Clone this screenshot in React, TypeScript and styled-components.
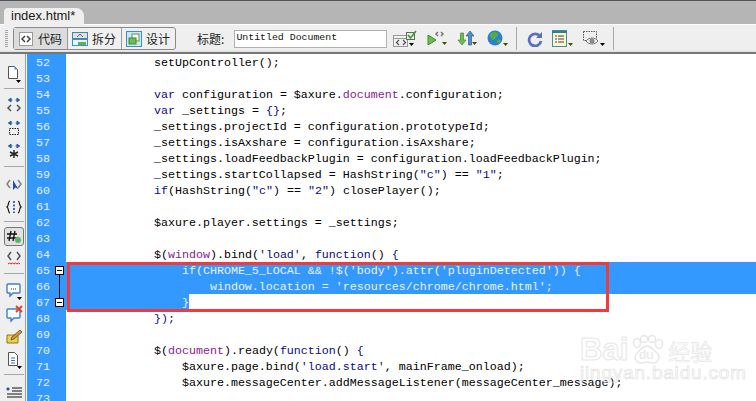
import { createGlobalStyle, styled } from "styled-components";
import { ReactNode } from "react";

const GlobalStyle = createGlobalStyle`
  html, body { margin: 0; padding: 0; background: #fff; }
  body { width: 756px; height: 401px; overflow: hidden; font-family: "Liberation Sans", sans-serif; }
`;

const Window = styled.div`
  width: 756px;
  height: 401px;
  display: flex;
  flex-direction: column;
  overflow: hidden;
`;

const TabStrip = styled.div`
  height: 24px;
  flex: none;
  background: #b5b5b5;
  border-top: 1px solid #555;
  box-sizing: border-box;
  padding-left: 4px;
  display: flex;
  align-items: flex-end;
`;

const Tab = styled.div`
  position: relative;
  z-index: 1;
  height: 17px;
  margin-bottom: -1px;
  padding: 0 9px 0 7px;
  background: #efefef;
  border-radius: 4px 8px 0 0;
  font-size: 13px;
  line-height: 16px;
  color: #1a1a1a;
`;

const Toolbar = styled.div`
  height: 30px;
  flex: none;
  box-sizing: border-box;
  background: linear-gradient(#efefef 25px, #dedede 27px);
  border-top: 1px solid #fff;
  border-bottom: 2px solid #777;
  display: flex;
  align-items: center;
  padding-left: 5px;
`;

const Grip = styled.div`
  width: 3px;
  height: 18px;
  margin-right: 5px;
  background: repeating-linear-gradient(#a5a5a5 0 1px, transparent 1px 2px);
`;

const ViewGroup = styled.div`
  display: flex;
  height: 21px;
  border: 1px solid #8a8a8a;
  border-radius: 3px;
  background: #f0f0f0;
`;

const ViewButton = styled.div<{ $active?: boolean }>`
  display: flex;
  align-items: center;
  gap: 4px;
  padding: 0 5px 0 4px;
  font-family: "Noto Sans CJK SC", sans-serif;
  font-size: 12px;
  color: #222;
  background: ${(p) => (p.$active ? "#dcdcdc" : "transparent")};
  & + & { border-left: 1px solid #9a9a9a; }
`;

const TitleLabel = styled.span`
  font-family: "Noto Sans CJK SC", sans-serif;
  font-size: 12px;
  color: #222;
  margin-left: 21px;
`;

const TitleInput = styled.div`
  width: 153px;
  height: 18px;
  margin: 0 6px 0 10px;
  box-sizing: border-box;
  border: 1px solid #b0b0b0;
  background: #fff;
  font-family: "Liberation Mono", monospace;
  font-size: 9.9px;
  line-height: 14px;
  padding-left: 1px;
  color: #111;
  white-space: nowrap;
`;

const ToolIcon = styled.svg`
  flex: none;
  display: block;
`;

const ToolRow = styled.div`
  display: flex;
  align-items: center;
  gap: 9px;
`;

const Separator = styled.div`
  width: 1px;
  height: 23px;
  background: #a8a8a8;
  margin: 0 10px 0 6px;
`;

const Body = styled.div`
  flex: 1;
  display: flex;
  min-height: 0;
  position: relative;
`;

const SideBar = styled.div`
  width: 23px;
  flex: none;
  background: #efefef;
  border-right: 1px solid #9a9a9a;
  margin-right: 1px;
  display: flex;
  flex-direction: column;
  align-items: center;
  padding: 8px 0 0 2px;
`;

const SideIcon = styled.div<{ $h?: number; $pressed?: boolean }>`
  width: 20px;
  height: ${(p) => p.$h ?? 23}px;
  flex: none;
  display: flex;
  align-items: center;
  justify-content: center;
  box-sizing: border-box;
  ${(p) => p.$pressed && "border: 1px solid #777; border-radius: 3px; background: #e2e2e2;"}
`;

const SideRule = styled.div`
  width: 20px;
  height: 1px;
  flex: none;
  background: #a8a8a8;
  margin: 3px 0 5px;
`;

const Editor = styled.div`
  flex: 1;
  display: flex;
  flex-direction: column;
  background: linear-gradient(90deg, #3399ff 39px, #fff 39px);
`;

const Line = styled.div<{ $selected?: boolean }>`
  height: 16px;
  flex: none;
  display: flex;
  font-family: "Liberation Mono", monospace;
  font-size: 11.67px;
  line-height: 18px;
  white-space: pre;
  background: ${(p) => (p.$selected ? "#3399ff" : "transparent")};
  color: ${(p) => (p.$selected ? "#e8f3ff" : "#000")};
`;

const LineNumber = styled.span`
  width: 39px;
  flex: none;
  box-sizing: border-box;
  padding-left: 9px;
  color: #e6f2ff;
  background: #3399ff;
`;

const Code = styled.span<{ $partial?: boolean }>`
  padding-left: 4px;
  ${(p) => p.$partial && "background: #3399ff; color: #e8f3ff;"}
`;

const Kw = styled.span`color: #0a0a8a;`;
const Obj = styled.span`color: #8a1a9a;`;
const Str = styled.span`color: #0a0a8a;`;
const Brace = styled.span`color: #0a0a8a;`;

const FoldBox = styled.div<{ $top: number }>`
  position: absolute;
  left: 55px;
  top: ${(p) => p.$top}px;
  width: 7px;
  height: 7px;
  border: 1px solid #000;
  background: #fff;
  display: flex;
  align-items: center;
  justify-content: center;
  &::after {
    content: "";
    width: 5px;
    height: 1px;
    background: #000;
  }
`;

const FoldLine = styled.div`
  position: absolute;
  left: 59px;
  top: 220px;
  width: 1px;
  height: 24px;
  background: #000;
`;

const Callout = styled.div`
  position: absolute;
  left: 67px;
  top: 208px;
  width: 536px;
  height: 44px;
  border: 3px solid #f23a3a;
  pointer-events: none;
`;

const Watermark = styled.div`
  position: absolute;
  left: 580px;
  top: 281px;
  display: flex;
  flex-direction: column;
  pointer-events: none;
`;

const WatermarkLogo = styled.div`
  display: flex;
  align-items: center;
  height: 30px;
  color: transparent;
  -webkit-text-stroke: 1px #e6e6e6;
  white-space: nowrap;
`;

const WatermarkBai = styled.span`
  font-family: "Liberation Sans", sans-serif;
  font-size: 31px;
  font-weight: 700;
  line-height: 30px;
`;

const WatermarkCn = styled.span`
  font-family: "Noto Sans CJK SC", sans-serif;
  font-size: 22px;
  line-height: 30px;
  -webkit-text-stroke: 0.7px #e6e6e6;
  margin-left: 2px;
`;

const WatermarkUrl = styled.div`
  font-family: "Liberation Sans", sans-serif;
  font-size: 19px;
  line-height: 20px;
  letter-spacing: 0.8px;
  margin-top: -2px;
  color: transparent;
  -webkit-text-stroke: 0.7px #e2e2e2;
  white-space: nowrap;
`;

function Caret({ c = "#222", x = 14, y = 13 }: { c?: string; x?: number; y?: number }) {
  return <path d={`M${x} ${y}h5l-2.5 3z`} fill={c} />;
}

function CodeIcon() {
  return (
    <ToolIcon width="16" height="16" viewBox="0 0 16 16">
      <rect x="1.5" y="1.5" width="13" height="13" fill="#fff" stroke="#9a9a9a" />
      <path d="M7 5 4 8l3 3M9 5l3 3-3 3" fill="none" stroke="#444" strokeWidth="1.5" />
    </ToolIcon>
  );
}

function SplitIcon() {
  return (
    <ToolIcon width="16" height="16" viewBox="0 0 16 16">
      <rect x="0.5" y="1.5" width="15" height="6" fill="#d6e4ee" stroke="#5a7f9e" />
      <rect x="0.5" y="8.5" width="15" height="6" fill="#eaf6ff" stroke="#3d91c9" />
      <path d="M6 11h8v3H6z" fill="#63b04a" />
      <path d="M5 6l3-3 3 3" fill="none" stroke="#666" />
    </ToolIcon>
  );
}

function DesignIcon() {
  return (
    <ToolIcon width="16" height="16" viewBox="0 0 16 16">
      <rect x="0.5" y="0.5" width="15" height="15" fill="#cfe6f7" stroke="#3d8ecb" />
      <rect x="6" y="3" width="7" height="7" fill="#f4f4f4" stroke="#5a9a4a" />
      <rect x="3" y="7" width="7" height="6" fill="#6cbe4f" stroke="#3f8a34" />
    </ToolIcon>
  );
}

function ToolButtons() {
  return (
    <>
      <ToolRow>
        <ToolIcon width="25" height="18" viewBox="0 0 25 18">
          <rect x="0.5" y="5.5" width="14" height="11" fill="#f2f2f2" stroke="#999" />
          <path d="M0 8.500h15" stroke="#999" />
          <path d="M6 10l-2.500 2.500L6 15M10 10l2.500 2.500L10 15" fill="none" stroke="#555" strokeWidth="1.300" />
          <rect x="13.500" y="2.500" width="8" height="7" fill="#e8f5e0" stroke="#666" />
          <path d="M15 5l2.500 3L23 1" fill="none" stroke="#3a9a2a" strokeWidth="1.600" />
          <Caret c="#000" x={16} y={13} />
        </ToolIcon>
        <ToolIcon width="21" height="16" viewBox="0 0 21 16">
          <path d="M1 4l8 5-8 5z" fill="#6cc04a" stroke="#3c8a2c" />
          <path d="M11 1L9 3l2 2M14 1l2 2-2 2" fill="none" stroke="#777" strokeWidth="1.500" />
          <Caret c="#4a4a00" x={15} y={11} />
        </ToolIcon>
        <ToolIcon width="21" height="18" viewBox="0 0 21 18">
          <path d="M5 15 1 10h2.500V3h3v7H9z" fill="#6cc04a" stroke="#3c8a2c" strokeWidth=".7" />
          <path d="M13 1l4 5h-2.500v9h-3V6H9z" fill="#4f8fc9" stroke="#2a5f95" strokeWidth=".7" />
          <Caret c="#4a4a00" x={15} y={12} />
        </ToolIcon>
        <ToolIcon width="23" height="17" viewBox="0 0 23 17">
          <circle cx="8" cy="8" r="7.500" fill="#2f7fd0" />
          <path d="M4 3c3-2 6-1 7 1s-2 3-3 5-3 1-4-1-2-3 0-5zM10 10c2-1 4 0 4 1s-2 3-3 2-2-2-1-3z" fill="#4fae48" />
          <Caret c="#4a4a00" x={16} y={13} />
        </ToolIcon>
      </ToolRow>
      <Separator />
      <ToolRow>
        <ToolIcon width="16" height="16" viewBox="0 0 16 16">
          <path d="M13 5.500A6 6 0 1 0 14 10" fill="none" stroke="#5a6fc0" strokeWidth="2.800" />
          <path d="M15 1v6H9z" fill="#5a6fc0" />
        </ToolIcon>
        <ToolIcon width="21" height="18" viewBox="0 0 21 18">
          <rect x="0.5" y="0.5" width="14" height="16" fill="#fbf5d0" stroke="#3f8f9f" />
          <path d="M0 1h15v2H0z" fill="#2f7f8f" />
          <path d="M3 6h2M6 6h6M3 9h2M6 9h6M3 12h2M6 12h6" stroke="#444" />
          <Caret c="#4a4a00" x={16} y={13} />
        </ToolIcon>
        <ToolIcon width="25" height="18" viewBox="0 0 25 18">
          <rect x="1.500" y="1.500" width="13" height="9" fill="none" stroke="#555" strokeDasharray="1.500 1" />
          <path d="M4 11c3-4 9-4 12 0-3 4-9 4-12 0z" fill="#f2f2f2" stroke="#777" />
          <circle cx="10" cy="11" r="2.500" fill="#888" />
          <Caret c="#000" x={18} y={13} />
        </ToolIcon>
      </ToolRow>
      <Separator />
    </>
  );
}

function Glyph({ children, w = 18, h = 18 }: { children: ReactNode; w?: number; h?: number }) {
  return (
    <ToolIcon width={w} height={h} viewBox={`0 0 ${w} ${h}`}>
      {children}
    </ToolIcon>
  );
}

function PawLogo() {
  return (
    <ToolIcon width="38" height="30" viewBox="0 0 38 30">
      <g fill="none" stroke="#e6e6e6" strokeWidth="1.400">
        <ellipse cx="9" cy="8" rx="3.500" ry="4.500" />
        <ellipse cx="16" cy="4" rx="3.500" ry="3.500" />
        <ellipse cx="24" cy="4" rx="3.500" ry="3.500" />
        <ellipse cx="31" cy="9" rx="3.500" ry="4.500" />
        <path d="M19 11c5 0 6 4 10 7 4 4 1 10-4 10-3 0-4-1-6-1s-3 1-6 1c-5 0-8-6-4-10 4-3 5-7 10-7z" />
      </g>
      <text x="11" y="24" fontFamily="Liberation Sans, sans-serif" fontSize="13" fill="#e6e6e6" stroke="none">du</text>
    </ToolIcon>
  );
}

const arrows = (
  <path d="M1 3h4M1 3l2.500-2v4zM12 3H8M12 3L9.500 1v4z" stroke="#2a5fa5" fill="#2a5fa5" transform="translate(2.500 0)" />
);

const codeLines: { n: number; code: ReactNode; selected?: boolean; partial?: boolean }[] = [
  { n: 52, code: "            setUpController();" },
  { n: 53, code: "" },
  { n: 54, code: <>            <Kw>var</Kw> configuration = $axure.<Obj>document</Obj>.configuration;</> },
  { n: 55, code: <>            <Kw>var</Kw> _settings = <Brace>{"{}"}</Brace>;</> },
  { n: 56, code: "            _settings.projectId = configuration.prototypeId;" },
  { n: 57, code: "            _settings.isAxshare = configuration.isAxshare;" },
  { n: 58, code: "            _settings.loadFeedbackPlugin = configuration.loadFeedbackPlugin;" },
  { n: 59, code: <>            _settings.startCollapsed = HashString(<Str>"c"</Str>) == <Str>"1"</Str>;</> },
  { n: 60, code: <>            <Kw>if</Kw>(HashString(<Str>"c"</Str>) == <Str>"2"</Str>) closePlayer();</> },
  { n: 61, code: "" },
  { n: 62, code: "            $axure.player.settings = _settings;" },
  { n: 63, code: "" },
  { n: 64, code: <>            $(<Obj>window</Obj>).bind(<Str>'load'</Str>, <Kw>function</Kw>() <Brace>{"{"}</Brace></> },
  { n: 65, code: "                if(CHROME_5_LOCAL && !$('body').attr('pluginDetected')) {", selected: true },
  { n: 66, code: "                    window.location = 'resources/chrome/chrome.html';", selected: true },
  { n: 67, code: "                }", partial: true },
  { n: 68, code: <>            <Brace>{"});"}</Brace></> },
  { n: 69, code: "" },
  { n: 70, code: <>            $(<Obj>document</Obj>).ready(<Kw>function</Kw>() <Brace>{"{"}</Brace></> },
  { n: 71, code: <>                $axure.page.bind(<Str>'load.start'</Str>, mainFrame_onload);</> },
  { n: 72, code: <>                $axure.messageCenter.addMessageListener(messageCenter_message);</> },
  { n: 73, code: "" },
];

export default function App() {
  return (
    <Window>
      <GlobalStyle />
      <TabStrip>
        <Tab>index.html*</Tab>
      </TabStrip>
      <Toolbar>
        <Grip />
        <ViewGroup>
          <ViewButton $active><CodeIcon />代码</ViewButton>
          <ViewButton><SplitIcon />拆分</ViewButton>
          <ViewButton><DesignIcon />设计</ViewButton>
        </ViewGroup>
        <TitleLabel>标题:</TitleLabel>
        <TitleInput>Untitled Document</TitleInput>
        <ToolButtons />
      </Toolbar>
      <Body>
        <SideBar>
          <SideIcon>
            <Glyph>
              <path d="M3.500 1.500h6l3 3v9h-9z" fill="#fff" stroke="#555" />
              <path d="M9.500 1.500v3h3z" fill="#4f8fc9" />
              <Caret c="#000" x={11} y={15} />
            </Glyph>
          </SideIcon>
          <SideRule />
          <SideIcon>
            <Glyph>{arrows}<path d="M6 8l-3 3 3 3M12 8l3 3-3 3" fill="none" stroke="#555" strokeWidth="1.500" /></Glyph>
          </SideIcon>
          <SideIcon>
            <Glyph>{arrows}<rect x="4.500" y="8.500" width="9" height="6" fill="none" stroke="#222" strokeDasharray="1.500 1" /></Glyph>
          </SideIcon>
          <SideIcon>
            <Glyph>{arrows}<path d="M9 7v8M5 9l8 4M13 9l-8 4" stroke="#222" strokeWidth="1.400" /></Glyph>
          </SideIcon>
          <SideRule />
          <SideIcon>
            <Glyph>
              <path d="M5 5 2 9l3 4M13 5l3 4-3 4" fill="none" stroke="#888" strokeWidth="1.600" />
              <path d="M8 5v10l2.500-2.500 3 2z" fill="#1f4fc0" />
            </Glyph>
          </SideIcon>
          <SideIcon>
            <Glyph>
              <path d="M5 3C3 3 4 8 2 9c2 1 1 6 3 6M13 3c2 0 1 5 3 6-2 1-1 6-3 6" fill="none" stroke="#111" strokeWidth="1.200" />
              <path d="M9 3v12" stroke="#1f3fd0" strokeWidth="1.600" strokeDasharray="2 1.500" />
            </Glyph>
          </SideIcon>
          <SideRule />
          <SideIcon $pressed $h={19}>
            <Glyph w={16} h={14}>
              <path d="M5 1 3 11M9 1 7 11M1 4h10M1 8h10" stroke="#111" strokeWidth="1.300" />
              <circle cx="12" cy="10" r="3" fill="#5fb65a" stroke="#8ac" strokeWidth=".6" />
            </Glyph>
          </SideIcon>
          <SideIcon $h={24}>
            <Glyph>
              <path d="M6 3 3 7l3 4M12 3l3 4-3 4" fill="none" stroke="#555" strokeWidth="1.500" />
              <path d="M3 15l1.500-1 1.500 1 1.500-1 1.500 1 1.500-1 1.500 1 1.500-1 1.500 1" fill="none" stroke="#d62020" />
            </Glyph>
          </SideIcon>
          <SideRule />
          <SideIcon>
            <Glyph>
              <path d="M3 2h11a1 1 0 0 1 1 1v7a1 1 0 0 1-1 1H8l-3 3v-3H3a1 1 0 0 1-1-1V3a1 1 0 0 1 1-1z" fill="#fff" stroke="#3f7fd0" strokeWidth="1.400" />
              <path d="M6 7h1M8 7h1M10 7h1" stroke="#333" />
              <Caret c="#000" x={12} y={15} />
            </Glyph>
          </SideIcon>
          <SideIcon>
            <Glyph>
              <path d="M3 4h11a1 1 0 0 1 1 1v7a1 1 0 0 1-1 1H9l-3 3v-3H3a1 1 0 0 1-1-1V5a1 1 0 0 1 1-1z" fill="#fff" stroke="#3f7fd0" strokeWidth="1.400" />
              <path d="M11 1l6 6M17 1l-6 6" stroke="#e0401f" strokeWidth="1.800" />
            </Glyph>
          </SideIcon>
          <SideIcon>
            <Glyph>
              <path d="M2 7h11v8H2z" fill="#e8d44a" stroke="#8a7a1a" />
              <path d="M6 12l1-3 8-7 2 2-8 7z" fill="#e98a2a" stroke="#553" strokeWidth=".8" />
            </Glyph>
          </SideIcon>
          <SideIcon>
            <Glyph>
              <path d="M3.500 1.500h6l3 3v10h-9z" fill="#fff" stroke="#555" />
              <path d="M6 7h4M6 9.500h4M6 12h4" stroke="#3f6fc0" strokeWidth="1.200" />
              <Caret c="#000" x={12} y={15} />
            </Glyph>
          </SideIcon>
          <SideRule />
          <SideIcon>
            <Glyph>
              <path d="M7 5h10M7 8h10M2 11h15M2 14h15" stroke="#111" />
              <path d="M1 6h4l-2-2zM1 6h4l-2 2z" fill="#2a5fa5" />
            </Glyph>
          </SideIcon>
        </SideBar>
        <Editor>
          {codeLines.map((l) => (
            <Line key={l.n} $selected={l.selected}>
              <LineNumber>{l.n}</LineNumber>
              <Code $partial={l.partial}>{l.code}</Code>
            </Line>
          ))}
        </Editor>
        <FoldBox $top={212} />
        <FoldLine />
        <FoldBox $top={244} />
        <Callout />
        <Watermark>
          <WatermarkLogo>
            <WatermarkBai>Bai</WatermarkBai>
            <PawLogo />
            <WatermarkCn>经验</WatermarkCn>
          </WatermarkLogo>
          <WatermarkUrl>jingyan.baidu.com</WatermarkUrl>
        </Watermark>
      </Body>
    </Window>
  );
}
